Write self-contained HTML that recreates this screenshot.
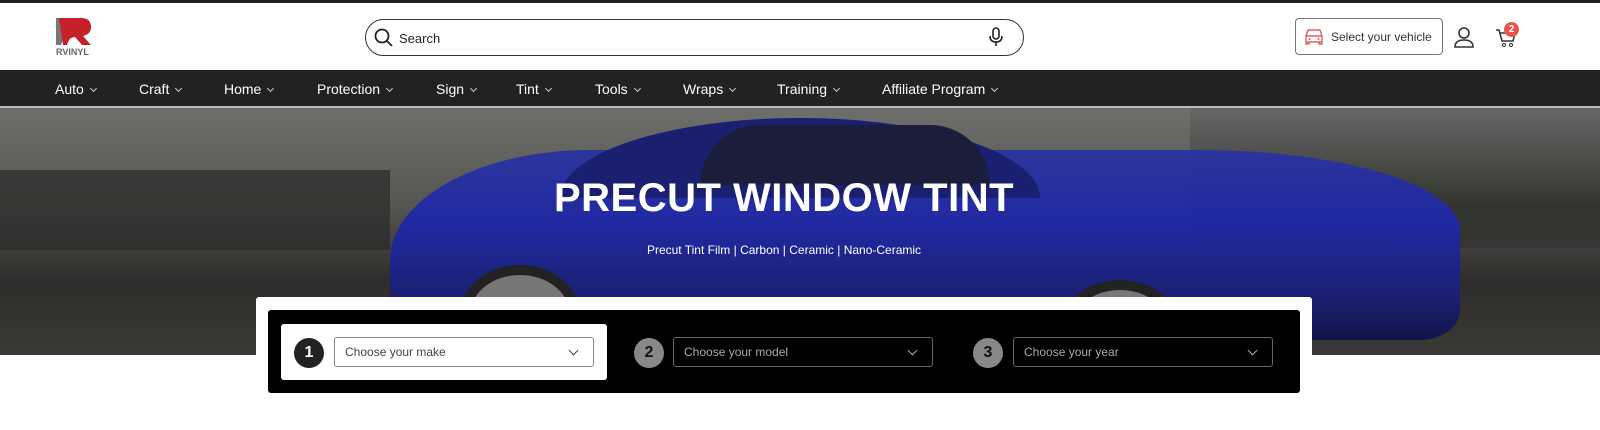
<!DOCTYPE html>
<html><head><meta charset="utf-8"><style>
*{margin:0;padding:0;box-sizing:border-box}
body{width:1600px;height:430px;overflow:hidden;background:#fff;font-family:"Liberation Sans",sans-serif;position:relative}
.abs{position:absolute}
.nav span{position:absolute;top:81px;color:#fff;font-size:14px}
.nav span:after{content:"";display:inline-block;width:4px;height:4px;border-right:1px solid #ccc;border-bottom:1px solid #ccc;transform:rotate(45deg);margin-left:7px;vertical-align:3px}
.sel{position:absolute;height:30px;border:1px solid #888;border-radius:3px;font-size:12px;padding-left:10px;line-height:28px}
.sel:after{content:"";position:absolute;right:16px;top:9px;width:6px;height:6px;border-right:1.5px solid currentColor;border-bottom:1.5px solid currentColor;transform:rotate(45deg)}
.num{position:absolute;width:30px;height:30px;border-radius:50%;font-weight:bold;font-size:16px;text-align:center;line-height:30px}
</style></head><body>
<div class="abs" style="left:0;top:0;width:1600px;height:3px;background:#222"></div>
<svg class="abs" style="left:55px;top:17px" width="40" height="40" viewBox="0 0 40 40">
<polygon points="1,1 16,1 6,28 1,28" fill="#777"/>
<path d="M4,1 H26 Q36,1 36,10 Q36,17 28,19 L36,28 H27 L20,20 Q14,20 12,28 H8 Z" fill="#c62128"/>
<text x="1" y="38" font-size="9" font-weight="bold" fill="#666" font-family="Liberation Sans">RVINYL</text>
</svg>
<div class="abs" style="left:365px;top:19px;width:659px;height:37px;border:1.5px solid #333;border-radius:19px"></div>
<svg class="abs" style="left:374px;top:28px" width="20" height="20" viewBox="0 0 20 20"><circle cx="8" cy="8" r="6.5" fill="none" stroke="#222" stroke-width="1.8"/><line x1="13" y1="13" x2="18" y2="18" stroke="#222" stroke-width="1.8"/></svg>
<div class="abs" style="left:399px;top:31px;font-size:13px;color:#222">Search</div>
<svg class="abs" style="left:988px;top:27px" width="16" height="20" viewBox="0 0 16 20"><rect x="5" y="1" width="6" height="11" rx="3" fill="none" stroke="#222" stroke-width="1.6"/><path d="M2,9 Q2,15 8,15 Q14,15 14,9 M8,15 V19" fill="none" stroke="#222" stroke-width="1.6"/></svg>
<div class="abs" style="left:1295px;top:18px;width:148px;height:37px;border:1.5px solid #777;border-radius:4px"></div>
<svg class="abs" style="left:1304px;top:28px" width="20" height="17" viewBox="0 0 20 17"><path d="M2,8 L4,2 H16 L18,8 V14 H2 Z M2,14 V16 H5 V14 M15,14 V16 H18 V14 M2,8 H18" fill="none" stroke="#e06060" stroke-width="1.4"/><circle cx="5.5" cy="11" r="1" fill="#e06060"/><circle cx="14.5" cy="11" r="1" fill="#e06060"/></svg>
<div class="abs" style="left:1331px;top:30px;font-size:12px;color:#333">Select your vehicle</div>
<svg class="abs" style="left:1453px;top:26px" width="22" height="22" viewBox="0 0 22 22"><circle cx="11" cy="7" r="5" fill="none" stroke="#333" stroke-width="1.6"/><path d="M2,21 Q2,14 11,14 Q20,14 20,21 Z" fill="none" stroke="#333" stroke-width="1.6"/></svg>
<svg class="abs" style="left:1495px;top:28px" width="22" height="20" viewBox="0 0 22 20"><path d="M1,2 H4 L7,13 H18 L20,5 H5" fill="none" stroke="#333" stroke-width="1.5"/><circle cx="9" cy="17" r="1.5" fill="none" stroke="#333"/><circle cx="16" cy="17" r="1.5" fill="none" stroke="#333"/></svg>
<div class="abs" style="left:1504px;top:22px;width:15px;height:15px;border-radius:50%;background:#e9534a;color:#fff;font-size:10px;font-weight:bold;text-align:center;line-height:15px">2</div>
<div class="abs" style="left:0;top:70px;width:1600px;height:36px;background:#222"></div>
<div class="abs" style="left:0;top:106px;width:1600px;height:2px;background:#bbb"></div>
<div class="nav"><span style="left:55px">Auto</span><span style="left:139px">Craft</span><span style="left:224px">Home</span><span style="left:317px">Protection</span><span style="left:436px">Sign</span><span style="left:516px">Tint</span><span style="left:595px">Tools</span><span style="left:683px">Wraps</span><span style="left:777px">Training</span><span style="left:882px">Affiliate Program</span></div>
<div class="abs" style="left:0;top:108px;width:1600px;height:247px;background:linear-gradient(180deg,#6e6e6b 0%,#555552 40%,#2e2d2b 70%,#3a3936 100%)"></div>
<div class="abs" style="left:0;top:170px;width:390px;height:80px;background:#2a2b28;opacity:.7"></div>
<div class="abs" style="left:1190px;top:108px;width:410px;height:140px;background:linear-gradient(180deg,#666 0%,#2a2d25 70%,#333 100%);opacity:.8"></div>
<div class="abs" style="left:390px;top:150px;width:1070px;height:190px;border-radius:200px 260px 40px 40px/110px 80px 30px 30px;background:linear-gradient(180deg,#2a33a0 0%,#1e27a6 40%,#1a1f7a 75%,#10134a 100%);opacity:.95"></div>
<div class="abs" style="left:560px;top:118px;width:480px;height:80px;border-radius:240px 240px 0 0/80px 80px 0 0;background:#1a1f70"></div>
<div class="abs" style="left:700px;top:125px;width:290px;height:60px;border-radius:120px 120px 0 0;background:#1a1e3a"></div>
<div class="abs" style="left:460px;top:265px;width:120px;height:100px;border-radius:50%;background:#777;border:10px solid #222"></div>
<div class="abs" style="left:1060px;top:280px;width:120px;height:100px;border-radius:50%;background:#777;border:10px solid #222"></div>
<div class="abs" style="left:0;top:176px;width:1568px;text-align:center;color:#fff;font-size:40px;font-weight:bold;letter-spacing:0.5px">PRECUT WINDOW TINT</div>
<div class="abs" style="left:0;top:243px;width:1568px;text-align:center;color:#fff;font-size:12px">Precut Tint Film | Carbon | Ceramic | Nano-Ceramic</div>
<div class="abs" style="left:256px;top:297px;width:1056px;height:110px;background:#fff;border-radius:3px"></div>
<div class="abs" style="left:268px;top:310px;width:1032px;height:83px;background:#000;border-radius:3px"></div>
<div class="abs" style="left:281px;top:324px;width:326px;height:56px;background:#fff;border-radius:3px"></div>
<div class="num" style="left:294px;top:338px;background:#222;color:#fff">1</div>
<div class="sel" style="left:334px;top:337px;width:260px;color:#444">Choose your make</div>
<div class="num" style="left:634px;top:338px;background:#888;color:#111">2</div>
<div class="sel" style="left:673px;top:337px;width:260px;color:#aaa;border-color:#666">Choose your model</div>
<div class="num" style="left:973px;top:338px;background:#888;color:#111">3</div>
<div class="sel" style="left:1013px;top:337px;width:260px;color:#aaa;border-color:#666">Choose your year</div>
</body></html>
